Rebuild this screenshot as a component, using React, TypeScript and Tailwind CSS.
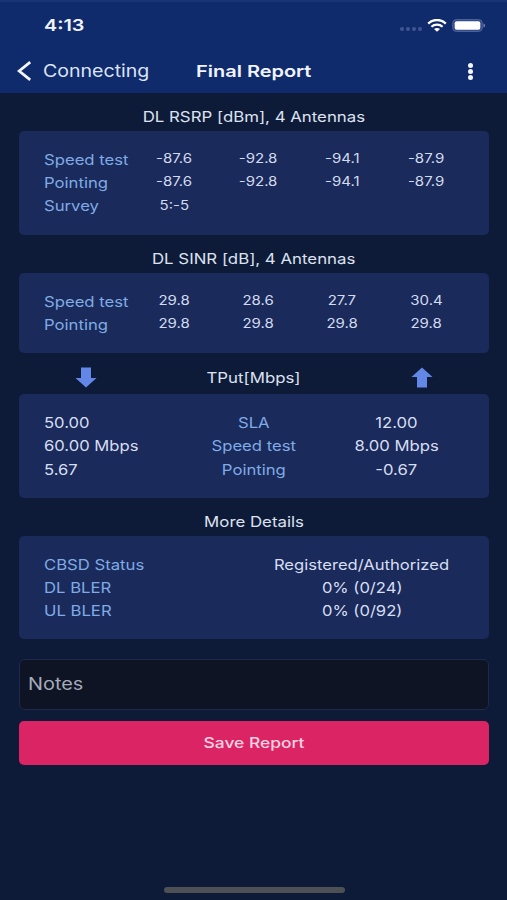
import type { ReactNode } from "react";

type TextProps = { children: ReactNode; className?: string };

/** Extended-width text; pass an origin and scale class to set its stretch. */
function Text({ children, className = "" }: TextProps) {
  return <span className={`inline-block whitespace-nowrap ${className}`}>{children}</span>;
}

function Label({ children, className = "origin-left" }: TextProps) {
  return (
    <Text className={`scale-x-[1.15] text-[14.5px] text-[#7fabe6] ${className}`}>{children}</Text>
  );
}

function SectionTitle({ children }: { children: ReactNode }) {
  return <Text className="scale-x-[1.16] text-[14.5px] text-[#dde2f0]">{children}</Text>;
}

function Card({ children, className = "" }: TextProps) {
  return <div className={`rounded-[5px] bg-[#1a2a5a] pr-[21px] pl-[25px] ${className}`}>{children}</div>;
}

function AntennaRow({ label, values }: { label: string; values: string[] }) {
  return (
    <div className="flex h-[23.2px] items-center">
      <div className="flex w-[88px]">
        <Label>{label}</Label>
      </div>
      <div className="grid flex-1 grid-cols-4 text-center text-[12.5px] text-[#d3dbf0]">
        {values.map((value, i) => (
          <div key={i}>
            <Text className="scale-x-[1.2]">{value}</Text>
          </div>
        ))}
      </div>
    </div>
  );
}

function ThroughputRow({ down, label, up }: { down: string; label: string; up: string }) {
  return (
    <div className="grid h-[23.2px] grid-cols-[139px_142px_1fr] items-center text-center text-[14.5px] text-[#d6def2]">
      <div className="text-left">
        <Text className="origin-left scale-x-[1.145]">{down}</Text>
      </div>
      <div>
        <Label className="origin-center">{label}</Label>
      </div>
      <div>
        <Text className="scale-x-[1.15]">{up}</Text>
      </div>
    </div>
  );
}

function DetailRow({ label, value }: { label: string; value: string }) {
  return (
    <div className="grid h-[23.2px] grid-cols-2 items-center text-[14.5px] text-[#d6def2]">
      <div>
        <Label>{label}</Label>
      </div>
      <div className="flex justify-center">
        <Text className="scale-x-[1.145]">{value}</Text>
      </div>
    </div>
  );
}

function Arrow({ up = false }: { up?: boolean }) {
  return (
    <svg width="22" height="21" viewBox="0 0 22 21" className={up ? "rotate-180" : ""}>
      <path d="M6 0.5h10v10.5h5.5L11 20.5 0.5 11H6z" fill="#6287e6" />
    </svg>
  );
}

export default function App() {
  return (
    <div className="flex h-[900px] w-[507px] flex-col overflow-hidden bg-[#0e1b38] font-['Inter','Liberation_Sans',sans-serif]">
      <header className="h-[93px] border-t-2 border-[#1a3474] bg-[#102b6c] text-[#f1f4fc]">
        <div className="flex h-[47px] items-center pr-[21px] pl-[44px]">
          <Text className="origin-left scale-x-[1.2] text-[16.5px] font-semibold">4:13</Text>
          <div className="ml-auto flex items-center">
            <div className="mt-[7px] mr-[5px] flex gap-[2px]">
              {[0, 1, 2, 3].map((i) => (
                <span key={i} className="size-[4px] rounded-full bg-[#405694]" />
              ))}
            </div>
            <svg width="20" height="13" viewBox="0 0 20 13" className="mr-[5px]" fill="none" stroke="#fff">
              <path d="M1.2 4.6C6.2-.2 13.8-.2 18.8 4.6" strokeWidth="2.4" />
              <path d="M4.4 7.7c3.2-2.9 8-2.9 11.2 0" strokeWidth="2.2" />
              <path d="M7 10.1c1.8-1.5 4.2-1.5 6 0L10 12.8z" fill="#fff" stroke="none" />
            </svg>
            <svg width="34" height="13" viewBox="0 0 34 13">
              <rect x="0.7" y="0.6" width="29.6" height="11.8" rx="3.6" fill="#334a8a" stroke="#4f659c" strokeWidth="1" />
              <rect x="2.7" y="2.2" width="25.6" height="8.6" rx="2" fill="#fff" />
              <path d="M31.5 4.5c2 .6 2 3.4 0 4z" fill="#7384ad" />
            </svg>
          </div>
        </div>
        <div className="grid h-[44px] grid-cols-[1fr_auto_1fr] items-center">
          <div className="flex items-center pl-[17px]">
            <svg width="15" height="20" viewBox="0 0 15 20" fill="none" stroke="#f4f6fd" strokeWidth="2.8">
              <path d="M13.2 1.2 2.2 10l11 8.8" />
            </svg>
            <Text className="ml-[11px] origin-left scale-x-[1.15] pt-px text-[17px] text-[#dce4f8]">Connecting</Text>
          </div>
          <Text className="scale-x-[1.21] pt-px text-[16.5px] font-semibold">Final Report</Text>
          <div className="flex flex-col items-end gap-[1px] pr-[34px]">
            {[0, 1, 2].map((i) => (
              <span key={i} className="h-[5px] w-[5px] rounded-full bg-[#f4f6fd]" />
            ))}
          </div>
        </div>
      </header>

      <main className="flex flex-1 flex-col pr-[18px] pl-[19px]">
        <div className="flex h-[38px] items-center justify-center pt-[9px]">
          <SectionTitle>DL RSRP [dBm], 4 Antennas</SectionTitle>
        </div>
        <Card className="h-[104px] pt-[17px]">
          <AntennaRow label="Speed test" values={["-87.6", "-92.8", "-94.1", "-87.9"]} />
          <AntennaRow label="Pointing" values={["-87.6", "-92.8", "-94.1", "-87.9"]} />
          <AntennaRow label="Survey" values={["5:-5"]} />
        </Card>

        <div className="flex h-[38px] items-center justify-center pt-[9px]">
          <SectionTitle>DL SINR [dB], 4 Antennas</SectionTitle>
        </div>
        <Card className="h-[80px] pt-[17px]">
          <AntennaRow label="Speed test" values={["29.8", "28.6", "27.7", "30.4"]} />
          <AntennaRow label="Pointing" values={["29.8", "29.8", "29.8", "29.8"]} />
        </Card>

        <div className="flex h-[41px] items-center justify-between pt-[8px] pr-[56px] pl-[56px]">
          <Arrow />
          <SectionTitle>TPut[Mbps]</SectionTitle>
          <Arrow up />
        </div>
        <Card className="h-[104px] pt-[17.5px]">
          <ThroughputRow down="50.00" label="SLA" up="12.00" />
          <ThroughputRow down="60.00 Mbps" label="Speed test" up="8.00 Mbps" />
          <ThroughputRow down="5.67" label="Pointing" up="-0.67" />
        </Card>

        <div className="flex h-[38px] items-center justify-center pt-[9px]">
          <SectionTitle>More Details</SectionTitle>
        </div>
        <Card className="h-[103px] pt-[17px]">
          <DetailRow label="CBSD Status" value="Registered/Authorized" />
          <DetailRow label="DL BLER" value="0% (0/24)" />
          <DetailRow label="UL BLER" value="0% (0/92)" />
        </Card>

        <div className="mt-[20px] flex h-[51px] items-center rounded-[6px] border border-[#1d2949] bg-[#0e1424] pt-px pl-[8px]">
          <Text className="origin-left scale-x-[1.17] text-[17px] text-[#a6abb9]">Notes</Text>
        </div>
        <button className="mt-[10.5px] h-[44.5px] rounded-[5px] bg-[#db2464] text-[14.5px] font-medium text-[#fbd3e2]">
          <Text className="scale-x-[1.2]">Save Report</Text>
        </button>
        <div className="mt-auto mb-[7px] h-[6px] w-[181px] self-center rounded-full bg-[#4d5055]" />
      </main>
    </div>
  );
}
